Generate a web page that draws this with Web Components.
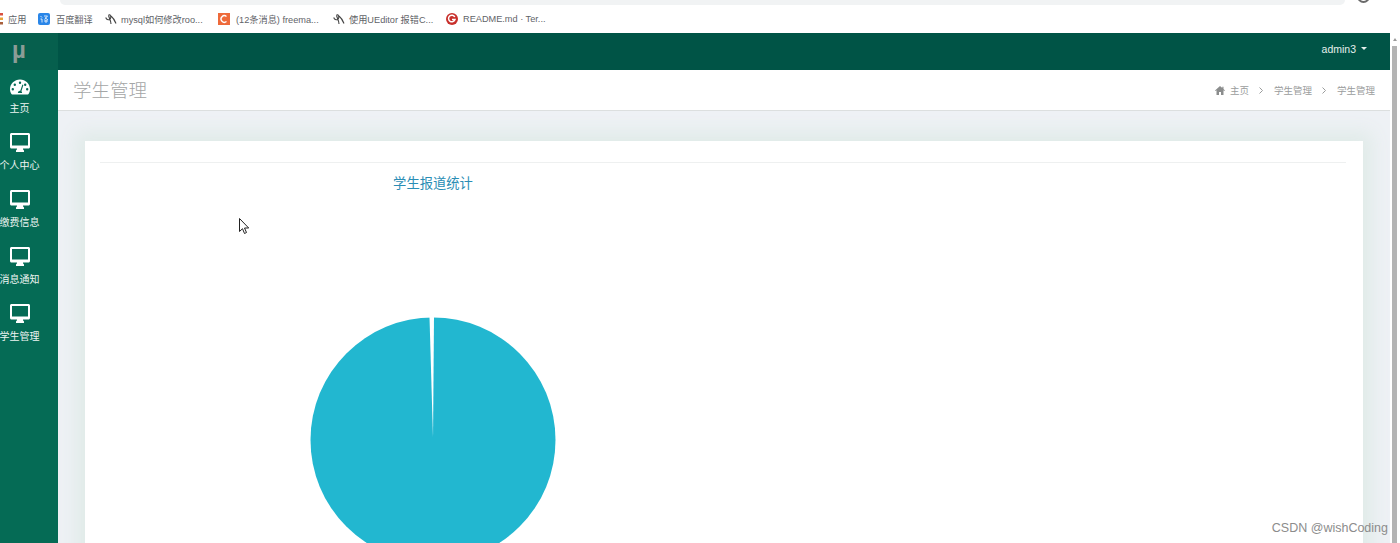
<!DOCTYPE html>
<html lang="zh-CN">
<head>
<meta charset="UTF-8" />
<title>学生管理</title>
<style>
  html, body { margin: 0; height: 100%; overflow: hidden; background: #fff; }
  body {
    font-family: "Liberation Sans", "Noto Sans CJK SC", sans-serif;
    display: flex;
    flex-direction: column;
    position: relative;
  }
</style>
<script>
  const define = (name, html) => {
    customElements.define(name, class extends HTMLElement {
      constructor() {
        super();
        this.attachShadow({ mode: "open" }).innerHTML = html;
      }
    });
  };

  define("browser-bar", `
    <style>
      :host { display: block; height: 33px; background: #fff; flex: none; overflow: hidden; }
      .top { display: flex; height: 5px; overflow: hidden; }
      .url { flex: 1; margin-left: 60px; background: #f1f3f4; border-radius: 0 0 8px 8px; }
      .me { flex: none; box-sizing: border-box; width: 13px; height: 13px; margin: -10px 30px 0 12px; border: 2px solid #6a6a6a; border-radius: 50%; }
      .marks { display: flex; align-items: center; height: 27px; }
    </style>
    <div class="top"><div class="url"></div><div class="me"></div></div>
    <div class="marks"><slot></slot></div>
  `);

  define("book-mark", `
    <style>
      :host { display: flex; align-items: center; flex: none; gap: 5px; font-size: 9.2px; color: #5f6368; white-space: nowrap; height: 14px; }
      ::slotted(svg) { flex: none; }
    </style>
    <slot></slot>
  `);

  define("side-bar", `
    <style>
      :host { display: flex; flex-direction: column; flex: none; width: 58px; background: #056b55; }
      .logo { height: 37px; box-sizing: border-box; padding: 0 0 4px 12px; background: #065f4d; display: flex; align-items: center;
        color: #8b9c96; font: bold 24px "Liberation Sans", sans-serif; }
      nav { display: flex; flex-direction: column; width: 39px; }
    </style>
    <div class="logo">&micro;</div>
    <nav><slot></slot></nav>
  `);

  define("nav-item", `
    <style>
      :host { display: flex; flex-direction: column; align-items: center; height: 57px; padding-top: 6px; box-sizing: border-box;
        color: #eef5f2; font-size: 10px; line-height: 14px; white-space: nowrap; }
      .i { display: block; height: 19px; margin-bottom: 7px; }
      svg, ::slotted(svg) { display: block; }
    </style>
    <div class="i"><slot name="icon">
      <svg width="20" height="19" viewBox="0 0 20 19"><path fill="#fff" fill-rule="evenodd" d="M1.500 0h17c.8 0 1.500.7 1.500 1.500v12.500c0 .8-.7 1.500-1.500 1.500h-5.500c0 1 .4 1.500 1 2v1.500H6v-1.500c.6-.5 1-1 1-2H1.500C.7 15.500 0 14.800 0 14V1.500C0 .7.700 0 1.500 0ZM2 2v10.500h16V2H2Z"/></svg>
    </slot></div>
    <slot></slot>
  `);

  define("top-bar", `
    <style>
      :host { display: flex; align-items: center; justify-content: flex-end; flex: none; height: 37px; background: #005446;
        box-sizing: border-box; padding: 0 23px 6px 0; color: #e6f0ec; font-size: 10.500px; }
      i { display: block; margin-left: 5px; border: 3px solid transparent; border-top-color: #e6f0ec; border-bottom: 0; }
    </style>
    <slot></slot><i></i>
  `);

  define("page-header", `
    <style>
      :host { display: flex; align-items: center; justify-content: space-between; flex: none; height: 41px; background: #fff;
        border-bottom: 1px solid #dcdfdf; box-sizing: border-box; padding: 0 15px 0 15px; }
      .t { font-size: 18.500px; font-weight: 300; color: #a4a6a6; margin-bottom: 2px; }
      .c { display: flex; align-items: center; font-size: 9.500px; color: #9a9c9c; }
      .c .home { margin-right: 5px; }
      .c .sep { margin: 0 10.500px; }
    </style>
    <div class="t"><slot name="title"></slot></div>
    <div class="c">
      <svg class="home" width="10" height="9" viewBox="0 0 10 9"><path fill="#8b8d8d" d="M5 0 0 4.500l.5.500L1.500 4.200V9h2.500V6h2v3h2.500V4.200L9.500 5l.5-.5L8.500 3.100V.8H7.300v1.200Z"/></svg>
      <span>主页</span>
      <svg class="sep" width="4" height="7" viewBox="0 0 4 7"><path d="M.5.500 3.500 3.500.5 6.500" fill="none" stroke="#9a9c9c"/></svg>
      <span>学生管理</span>
      <svg class="sep" width="4" height="7" viewBox="0 0 4 7"><path d="M.5.500 3.500 3.500.5 6.500" fill="none" stroke="#9a9c9c"/></svg>
      <span>学生管理</span>
    </div>
  `);

  define("stat-card", `
    <style>
      :host { display: block; background: #fff; margin: 30px 27px 0 27px; padding: 21px 17px 0 15px; height: 500px; box-sizing: border-box;
        box-shadow: 0 0 18px 9px #e0ebe8; }
      hr { margin: 0; border: 0; border-top: 1px solid #eef0f0; }
      .head { margin-top: 13px; width: 666px; text-align: center; color: #2a8db5; font-size: 13.300px; line-height: 16px; }
      .chart { width: 666px; display: flex; justify-content: center; margin-top: 125px; }
    </style>
    <hr>
    <div class="head"><slot name="title"></slot></div>
    <div class="chart"><slot></slot></div>
  `);

  define("pie-chart", `
    <style>
      :host { display: block; width: 246px; height: 246px; flex: none; }
      svg { display: block; }
    </style>
    <svg width="246" height="246" viewBox="-123 -123 246 246">
      <circle r="122.500" fill="#22b7d0"/>
      <path fill="#fff" d="M-3.500 -123 L1 -123 L0 -2 Z"/>
    </svg>
  `);

  define("main-shell", `
    <style>
      :host { display: flex; flex: 1; min-height: 0; overflow: hidden; }
      .main { flex: 1; min-width: 0; display: flex; flex-direction: column; }
      .body { flex: 1; min-height: 0; overflow: hidden; background: #eef1f5; }
      .bar { flex: none; width: 10px; background: #fff; display: flex; flex-direction: column; padding-left: 2px; box-sizing: border-box; }
      .up { height: 13px; display: flex; align-items: center; }
      .up i { display: block; margin-left: 1px; border: 2px solid transparent; border-bottom: 3px solid #9a9a9a; border-top: 0; }
      .thumb { flex: 1; width: 5px; background: #b4b4b4; }
    </style>
    <slot name="side"></slot>
    <div class="main">
      <slot name="top"></slot>
      <slot name="header"></slot>
      <div class="body"><slot></slot></div>
    </div>
    <div class="bar"><div class="up"><i></i></div><div class="thumb"></div></div>
  `);

  define("water-mark", `
    <style>
      :host { position: absolute; right: 12px; bottom: 8px; font-size: 12.500px; line-height: 14px; color: #8c8c8c; }
    </style>
    <slot></slot>
  `);

  define("mouse-cursor", `
    <style>
      :host { position: absolute; left: 239px; top: 218px; width: 11px; height: 17px; }
      svg { display: block; }
    </style>
    <svg width="11" height="17" viewBox="0 0 11 17"><path fill="#fff" stroke="#222" stroke-width="1" d="M.500.500v13l3-2.800 2 4.800 2-1-2-4.500h4.200Z"/></svg>
  `);
</script>
</head>
<body>
  <browser-bar>
    <book-mark style="width:38px">
      <svg width="3" height="12" viewBox="0 0 3 12"><rect width="3" height="2.500" fill="#d9503f"/><rect y="4.500" width="3" height="2.500" fill="#e8a33a"/><rect y="9" width="3" height="2.500" fill="#a9603c"/></svg>
      <span>应用</span></book-mark>
    <book-mark style="width:67px;gap:6px">
      <svg width="12" height="12" viewBox="0 0 12 12"><rect width="12" height="12" rx="2" fill="#2a86e8"/><path d="M2.500 3 4 4.500M2.500 6H4v3.500M6 3h3.500L6.500 6.500M7 4.500 10 7M6 8h4M8 6.500V10" stroke="#fff" stroke-width=".8" fill="none"/></svg>
      <span>百度翻译</span></book-mark>
    <book-mark style="width:113px;gap:4px">
      <svg width="12" height="12" viewBox="0 0 12 12"><path d="M.7 4.500C1.500 7 4.500 7.500 5.500 5.500 6.500 3 4.800 1 3.800 2 2.800 3.200 6 7 6 11M6 3c2.500 2 4 5 5 7.500" stroke="#444" stroke-width="1.100" fill="none"/></svg>
      <span>mysql如何修改roo...</span></book-mark>
    <book-mark style="width:115px;gap:6px">
      <svg width="12" height="12" viewBox="0 0 12 12"><rect width="12" height="12" fill="#ee6a3a"/><path d="M8.500 3.500A3.300 3.300 0 1 0 8.500 8.500" stroke="#fff" stroke-width="1.300" fill="none"/></svg>
      <span>(12条消息) freema...</span></book-mark>
    <book-mark style="width:113px;gap:4px">
      <svg width="12" height="12" viewBox="0 0 12 12"><path d="M.7 4.500C1.500 7 4.500 7.500 5.500 5.500 6.500 3 4.800 1 3.800 2 2.800 3.200 6 7 6 11M6 3c2.500 2 4 5 5 7.500" stroke="#444" stroke-width="1.100" fill="none"/></svg>
      <span>使用UEditor 报错C...</span></book-mark>
    <book-mark style="width:110px">
      <svg width="12" height="12" viewBox="0 0 12 12"><circle cx="6" cy="6" r="6" fill="#c8302c"/><path d="M8.800 4A3.300 3.300 0 1 0 9 6.500H6" stroke="#fff" stroke-width="1.500" fill="none"/></svg>
      <span>README.md · Ter...</span></book-mark>
  </browser-bar>
  <main-shell>
    <side-bar slot="side">
      <nav-item>
        <svg slot="icon" width="20" height="19" viewBox="0 0 20 19"><g transform="translate(0 3.500)"><path fill="#fff" fill-rule="evenodd" d="M10 0C4.500 0 0 4.300 0 9.600c0 1.900.5 3.500 1.400 5 .2.300.5.400.8.400h15.600c.3 0 .6-.1.800-.4.900-1.500 1.400-3.100 1.400-5C20 4.300 15.500 0 10 0ZM10 2a1.200 1.200 0 1 1 0 2.400A1.200 1.200 0 0 1 10 2ZM4.800 4a1.200 1.200 0 1 1 0 2.400 1.200 1.200 0 0 1 0-2.400ZM15.200 4a1.200 1.200 0 1 1 0 2.400 1.200 1.200 0 0 1 0-2.400ZM2.800 8.500a1.200 1.200 0 1 1 0 2.400 1.200 1.200 0 0 1 0-2.400ZM17.200 8.500a1.200 1.200 0 1 1 0 2.400 1.200 1.200 0 0 1 0-2.400ZM12.400 5.100l1 .3-2 6.400c.5.400.8 1 .7 1.700H7.900c-.1-1.200.8-2.200 2-2.200h.4Z"/></g></svg>
        主页</nav-item>
      <nav-item>个人中心</nav-item>
      <nav-item>缴费信息</nav-item>
      <nav-item>消息通知</nav-item>
      <nav-item>学生管理</nav-item>
    </side-bar>
    <top-bar slot="top">admin3</top-bar>
    <page-header slot="header"><span slot="title">学生管理</span></page-header>
    <stat-card>
      <span slot="title">学生报道统计</span>
      <pie-chart></pie-chart>
    </stat-card>
  </main-shell>
  <mouse-cursor></mouse-cursor>
  <water-mark>CSDN @wishCoding</water-mark>
</body>
</html>
